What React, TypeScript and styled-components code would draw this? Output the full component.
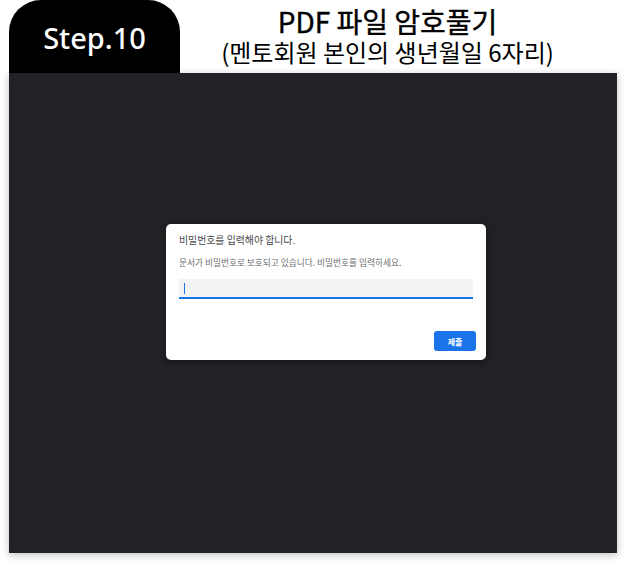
import React from "react";
import styled, { createGlobalStyle } from "styled-components";

const Global = createGlobalStyle`
  html, body { margin: 0; padding: 0; background: #ffffff; }
  body { font-family: "Noto Sans CJK KR", "Noto Sans", sans-serif; }
`;

const Page = styled.div`
  width: 627px;
  height: 564px;
  padding: 0 10px 0 9px;
  box-sizing: border-box;
  display: flex;
  flex-direction: column;
`;

const Header = styled.div`
  display: flex;
  height: 73px;
`;

const StepTab = styled.div`
  width: 171px;
  background: #000;
  border-radius: 32px 32px 0 0;
  display: flex;
  align-items: center;
  justify-content: center;
  color: #fff;
  font-family: "Noto Sans", sans-serif;
  font-size: 29px;
  font-weight: 500;
  padding-top: 2px;
  box-sizing: border-box;
`;

const TitleBlock = styled.div`
  flex: 1;
  display: flex;
  flex-direction: column;
  align-items: center;
  padding-right: 22px;
  padding-top: 4px;
`;

const Title = styled.div`
  font-family: "Noto Sans CJK KR", sans-serif;
  font-size: 28px;
  font-weight: 400;
  -webkit-text-stroke: 0.4px #000;
  color: #000;
  line-height: 34px;
`;

const Subtitle = styled.div`
  font-family: "Noto Sans CJK KR", sans-serif;
  font-size: 24px;
  font-weight: 400;
  color: #000;
  line-height: 26px;
  margin-top: 1px;
  white-space: nowrap;
`;

const Viewer = styled.div`
  height: 480px;
  background: #212225;
  box-shadow: 0 2px 8px rgba(0, 0, 0, 0.25);
  padding: 151px 0 0 157px;
  box-sizing: border-box;
`;

const Dialog = styled.div`
  width: 320px;
  height: 136px;
  background: #fff;
  border-radius: 5px;
  box-shadow: 0 2px 6px rgba(0, 0, 0, 0.4);
  box-sizing: border-box;
  padding: 10px 10px 0 13px;
  display: flex;
  flex-direction: column;
`;

const DialogTitle = styled.div`
  font-size: 9.9px;
  color: #45484c;
  line-height: 12px;
`;

const DialogText = styled.div`
  font-size: 8.7px;
  color: #6a6e72;
  line-height: 12px;
  margin-top: 11px;
  white-space: nowrap;
`;

const Input = styled.div`
  margin-top: 10px;
  height: 20px;
  width: 294px;
  background: #f1f3f4;
  border-bottom: 2px solid #1a73e8;
  box-sizing: border-box;
  display: flex;
  align-items: center;
  padding-left: 5px;
`;

const Caret = styled.div`
  width: 1px;
  height: 11px;
  background: #1a73e8;
`;

const Footer = styled.div`
  display: flex;
  justify-content: flex-end;
  margin-top: 32px;
`;

const Button = styled.div`
  width: 42px;
  height: 20px;
  background: #1a73e8;
  border-radius: 3px;
  color: #fff;
  font-size: 8px;
  font-weight: 700;
  display: flex;
  align-items: center;
  justify-content: center;
`;

export default function App() {
  return (
    <>
      <Global />
      <Page>
        <Header>
          <StepTab>Step.10</StepTab>
          <TitleBlock>
            <Title>PDF 파일 암호풀기</Title>
            <Subtitle>(멘토회원 본인의 생년월일 6자리)</Subtitle>
          </TitleBlock>
        </Header>
        <Viewer>
          <Dialog>
            <DialogTitle>비밀번호를 입력해야 합니다.</DialogTitle>
            <DialogText>문서가 비밀번호로 보호되고 있습니다. 비밀번호를 입력하세요.</DialogText>
            <Input>
              <Caret />
            </Input>
            <Footer>
              <Button>제출</Button>
            </Footer>
          </Dialog>
        </Viewer>
      </Page>
    </>
  );
}
